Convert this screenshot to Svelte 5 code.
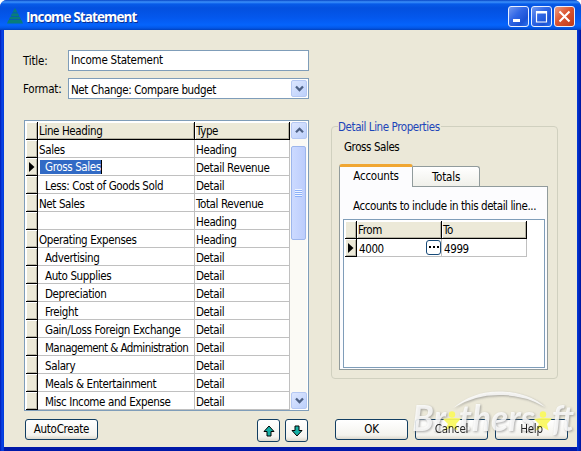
<script>
  const rows = [
    ['Sales', 'Heading', 0],
    ['Gross Sales', 'Detail Revenue', 1],
    ['Less: Cost of Goods Sold', 'Detail', 1],
    ['Net Sales', 'Total Revenue', 0],
    ['', 'Heading', 0],
    ['Operating Expenses', 'Heading', 0],
    ['Advertising', 'Detail', 1],
    ['Auto Supplies', 'Detail', 1],
    ['Depreciation', 'Detail', 1],
    ['Freight', 'Detail', 1],
    ['Gain/Loss Foreign Exchange', 'Detail', 1],
    ['Management & Administration', 'Detail', 1],
    ['Salary', 'Detail', 1],
    ['Meals & Entertainment', 'Detail', 1],
    ['Misc Income and Expense', 'Detail', 1]
  ];
</script>

{#snippet chevron(up)}
  <svg width="9" height="7" viewBox="0 0 9 7"><path d={up ? 'M1 5.2 4.5 1.8 8 5.2' : 'M1 1.5 4.5 5 8 1.5'} fill="none" stroke="#4d6185" stroke-width="2.3" /></svg>
{/snippet}

{#snippet star(x, y)}
  <g transform="translate({x} {y})" fill="#faf85c" fill-opacity=".92"><circle cx="0" cy="-7.5" r="3.200" /><path d="M-1.500-4H2.500L9-3.500 4 2 5.500 8.500-.5 5-8 9-4 2-9-3Z" /></g>
{/snippet}

<div class="window">
  <header>
    <svg class="logo" width="16" height="16" viewBox="0 0 16 16"><g fill="#087d7b"><path d="M8 0 10.500 4.500h-5Z" /><path d="M5 5.300h6l1.200 2.700H3.800Z" /><path d="M3.300 8.800h9.400l1.300 2.500H2Z" /><path d="M1.500 12.100h13l1.500 3.400H0Z" /></g><path d="M5.500 4.500h5v.8h-5zM4 8h8v.8H4zM2 11.300h12v.8H2z" fill="#075f9c" /></svg>
    <h1>Income Statement</h1>
    <div class="controls">
      <span class="ctl"><svg width="19" height="19"><path d="M4 12h7v3H4z" fill="#fff" /></svg></span>
      <span class="ctl"><svg width="19" height="19"><path d="M4 4.500h11M4.500 4v11h10V4" fill="none" stroke="#fff" stroke-width="1.200" /><path d="M4 4h11v2.500H4z" fill="#fff" /></svg></span>
      <span class="ctl close"><svg width="19" height="19"><path d="M4.500 4.500 14.500 14.500M14.500 4.500 4.500 14.500" stroke="#fff" stroke-width="2.100" /></svg></span>
    </div>
  </header>

  <main>
    <section class="fields">
      <span class="lbl">Title:</span>
      <div class="input title">Income Statement</div>
      <span class="lbl">Format:</span>
      <div class="input combo"><span>Net Change: Compare budget</span><span class="sb">{@render chevron(false)}</span></div>
    </section>

    <div class="body">
      <div class="grid">
        <div class="table">
          <div class="row head"><i></i><b>Line Heading</b><b>Type</b></div>
          {#each rows as [name, type, indent], n}
            <div class="row">
              <i>{#if n === 1}<svg width="7" height="12"><path d="M1 1 6.500 6 1 11Z" /></svg>{/if}</i>
              <span class:indent={indent && n !== 1} class:tight={name.length > 26}>{#if n === 1}<mark>{name}</mark>{:else}{name}{/if}</span>
              <span>{type}</span>
            </div>
          {/each}
        </div>
        <div class="scroll">
          <span class="sb up">{@render chevron(true)}</span>
          <span class="thumb"><em></em></span>
          <span class="sb down">{@render chevron(false)}</span>
        </div>
      </div>

      <div class="group">
        <div class="legend"><span>Detail Line Properties</span></div>
        <div class="subject">Gross Sales</div>
        <div class="tabs"><span class="tab active">Accounts</span><span class="tab">Totals</span></div>
        <div class="panel">
          <p>Accounts to include in this detail line...</p>
          <div class="accounts">
            <div class="row head"><i></i><b>From</b><b>To</b></div>
            <div class="row">
              <i><svg width="7" height="12"><path d="M1 1 6.500 6 1 11Z" /></svg></i>
              <span class="from">4000<button class="dots" aria-label="Choose account"><svg width="12" height="3"><path d="M1 0h2v2H1zM5 0h2v2H5zM9 0h2v2H9z" /></svg></button></span>
              <span class="to">4999</span>
            </div>
          </div>
        </div>
      </div>
    </div>

    <footer>
      <button class="btn auto">AutoCreate</button>
      <button class="btn arrow" aria-label="Move up"><svg width="12" height="12"><path d="M6 1 11 6.500H8V11H4V6.500H1Z" fill="#16b0a5" stroke="#000" /></svg></button>
      <button class="btn arrow last" aria-label="Move down"><svg width="12" height="12"><path d="M6 11 11 5.500H8V1H4V5.500H1Z" fill="#16b0a5" stroke="#000" /></svg></button>
      <button class="btn">OK</button>
      <button class="btn"><span>Cancel</span></button>
      <button class="btn"><span>Help</span></button>
    </footer>
  </main>

  <svg class="mark" width="173" height="58" viewBox="408 388 173 58">
    <g class="brand">
      <path d="M453 408Q474 390 503 391.500 530 393 545 407 526 396 503 395 475 394 453 408Z" />
      <text x="412" y="431" textLength="34" lengthAdjust="spacingAndGlyphs">Br</text>
      <text x="459" y="431" textLength="76" lengthAdjust="spacingAndGlyphs">thers</text>
      <text x="552" y="431" textLength="22" lengthAdjust="spacingAndGlyphs">ft</text>
    </g>
    {@render star(452, 422)}
    {@render star(543, 422)}
  </svg>
</div>

<style>
  * { box-sizing: border-box; }
  .window {
    position: relative; width: 581px; height: 451px; overflow: hidden;
    display: flex; flex-direction: column;
    border-radius: 7px 7px 0 0; background: linear-gradient(90deg, #0019b4, #0845e8 2px, #0038d8 4px, #0038d8 calc(100% - 4px), #0030cc calc(100% - 3px), #00139c);
    font: 11.500px/17px "DejaVu Sans Condensed", "DejaVu Sans", sans-serif; color: #000;
  }
  header {
    height: 30px; flex: none; display: flex; align-items: center; padding: 2px 6px 0 7px;
    background: linear-gradient(#0644c5 0, #3c91fb 2px, #075be8 4px, #0350df 8px, #0458ee 18px, #0564fc 25px, #0357e7 28px, #0141bd 30px);
  }
  .logo { margin-top: -1px; }
  h1 {
    margin: 2px 0 0 3px; flex: 1; color: #fff; font: bold 13.500px/20px "Open Sans", "Noto Sans", sans-serif;
    letter-spacing: -.88px; text-shadow: 1px 1px #0a2f91;
  }
  .controls { display: flex; gap: 2px; }
  .ctl {
    width: 21px; height: 21px; border: 1px solid #e8efff; border-radius: 3px; display: flex;
    background: linear-gradient(135deg, #7298f0, #3268e6 40%, #1b52d5 75%, #2c72ef);
  }
  .close { background: linear-gradient(135deg, #e99c84, #dc5530 45%, #bd391a); }
  main {
    flex: 1; margin: 0 4px 4px; background: #ebe8d8; padding: 20px 8px 0 19px;
    display: flex; flex-direction: column; box-shadow: 0 4px #0018a8;
  }
  .fields { display: grid; grid-template-columns: 45px 241px; grid-template-rows: 21px 21px; row-gap: 7px; }
  .lbl { line-height: 23px; letter-spacing: -.2px; }
  .input { border: 1px solid #7f9db9; background: #fff; line-height: 19px; padding-left: 2px; letter-spacing: -.38px; white-space: nowrap; }
  .title { letter-spacing: -.25px; }
  .combo { display: flex; justify-content: space-between; padding: 1px 1px 1px 2px; line-height: 20px; }
  .sb {
    width: 16px; height: 17px; display: flex; align-items: center; justify-content: center; flex: none;
    border-radius: 2px; border: 1px solid #b5c8f3; background: linear-gradient(135deg, #dce6ff, #bcd0fb);
  }
  .body { display: flex; margin: 21px 0 0 1px; height: 291px; flex: none; }
  .grid { width: 285px; height: 291px; border: 1px solid #7f9db9; background: #fff; padding: 1px; display: flex; }
  .table { width: 264px; }
  .row { display: grid; grid-template-columns: 12px 157px 95px; height: 18px; white-space: nowrap; line-height: 20px; letter-spacing: -.38px; }
  .row > span { height: 18px; border-right: 1px solid #c0c0c0; border-bottom: 1px solid #c0c0c0; padding-left: 1px; }
  .row > i, .row > b {
    height: 18px; background: #ece9d8; border-right: 1px solid #000; border-bottom: 1px solid #000; font-weight: normal;
    box-shadow: inset 1px 1px #fff, inset -1px -1px #b5b2a3; padding-left: 1px; line-height: 19px;
  }
  .row > i { display: flex; align-items: center; padding-left: 2px; }
  .row > .indent { padding-left: 7px; }
  .row > .tight { letter-spacing: -.56px; }
  mark { display: block; width: 62px; height: 14px; margin: 2px 0 0 1px; padding-left: 5px; line-height: 15px; background: #316ac5; color: #fff; border-right: 1px solid #000; }
  .scroll { width: 17px; display: flex; flex-direction: column; background: #fbfaf5; padding: 0 0 0 1px; }
  .thumb { width: 15px; height: 94px; margin-top: 7px; border: 1px solid #9db6ec; border-radius: 2px; background: linear-gradient(90deg, #ccdaff, #bccdfc); display: flex; align-items: center; justify-content: center; }
  .thumb em { width: 7px; height: 8px; background: repeating-linear-gradient(#eef4ff 0 1px, #8cb0f8 1px 2px); }
  .down { margin-top: auto; }
  .group { width: 227px; height: 253px; margin: 6px 0 0 22px; border: 1px solid #d0d0bf; border-radius: 4px; padding: 0 9px 0 7px; }
  .legend { height: 12px; color: #1c45b9; letter-spacing: -.42px; line-height: 17px; }
  .legend span { display: block; width: 103px; height: 15px; margin: -8px 0 0 -1px; background: #ebe8d8; white-space: nowrap; }
  .subject { padding: 8px 0 0 5px; height: 33px; letter-spacing: -.42px; }
  .tabs { display: flex; align-items: flex-end; height: 22px; }
  .tab { width: 67px; height: 20px; border: 1px solid #919b9c; border-width: 1px 1px 0 0; border-radius: 0 3px 0 0; text-align: center; line-height: 21px; background: linear-gradient(#fff, #f0f0ea); letter-spacing: -.2px; }
  .active { width: 74px; height: 23px; margin-bottom: -1px; border-width: 3px 1px 0; border-top-color: #f0a632; border-radius: 3px 3px 0 0; background: #fcfcfe; line-height: 18px; position: relative; }
  .panel { width: 209px; height: 184px; border: 1px solid #919b9c; background: #fcfcfe; padding: 11px 2px 2px 3px; }
  .panel p { margin: 0 0 4px; padding-left: 10px; letter-spacing: -.42px; white-space: nowrap; }
  .accounts { height: 149px; width: 202px; border: 1px solid #7f9db9; background: #fff; padding: 1px; }
  .accounts .row { grid-template-columns: 12px 85px 85px; }
  .row > .from { display: flex; justify-content: space-between; padding-left: 2px; }
  .row > .to { padding-left: 2px; }
  .dots { width: 15px; height: 15px; margin-top: 1px; padding: 0; border: 1px solid #174a78; border-radius: 3px; background: #fff; display: flex; align-items: center; justify-content: center; flex: none; }
  footer { display: flex; padding: 8px 0 0 2px; gap: 7px; }
  .btn {
    width: 73px; height: 21px; padding: 0; border: 1px solid #123e62; border-radius: 3px; flex: none;
    background: linear-gradient(#fff, #f4f3ee 80%, #dcd8cd); font: inherit; letter-spacing: -.3px; line-height: 19px;
  }
  .btn span { position: relative; z-index: 2; opacity: .85; }
  .auto { margin-right: 152px; }
  .arrow { width: 23px; height: 23px; margin-right: -2px; display: flex; align-items: center; justify-content: center; }
  .last { margin-right: 20px; }
  .mark { position: absolute; left: 408px; top: 388px; }
  .brand { fill: #fff; fill-opacity: .82; filter: drop-shadow(1px 1px 1px #777b); }
  .brand text { font: italic bold 36px Lato, sans-serif; }
</style>
